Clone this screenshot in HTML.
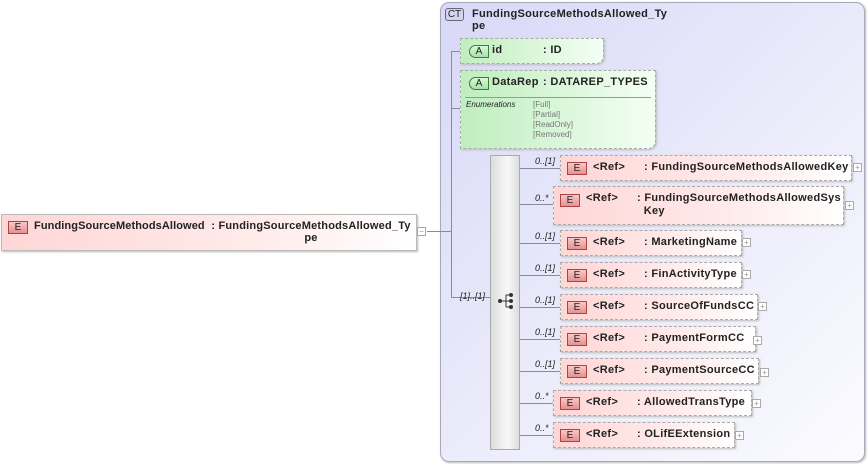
<!DOCTYPE html>
<html><head><style>
*{margin:0;padding:0;box-sizing:border-box}
body{width:868px;height:464px;background:#fff;position:relative;overflow:hidden;font-family:"Liberation Sans",Arial,sans-serif;font-size:11px;color:#222}
.a{position:absolute}
.ct{left:440px;top:2px;width:425px;height:460px;border:1px solid #a8a8b8;border-radius:9px;background:linear-gradient(135deg,#d8d8f8 0%,#ececfb 55%,#fbfbff 100%);box-shadow:1px 1px 2px #bbb}
.ctb{left:445px;top:8px;width:19px;height:13px;border:1px solid #667;border-radius:3px;background:#d4d4f0;font-size:10px;text-align:center;line-height:11px}
.el{border:1px dashed #aaa;background:linear-gradient(90deg,#ffd6d6,#ffeaea 60%,#fff);box-shadow:1px 1px 2px #bbb;font-weight:bold;letter-spacing:0.3px}
.eb{position:absolute;width:20px;height:13px;border:1px solid #a44;background:linear-gradient(#f6c8c8,#e89090);font-size:10px;text-align:center;line-height:11px;font-weight:normal;letter-spacing:0}
.hl{position:absolute;height:1px;background:#8a8a9a}
.vl{position:absolute;width:1px;background:#8a8a9a}
.pl{position:absolute;width:9px;height:9px;border:1px solid #aaa;background:#fff;font-size:8px;line-height:7px;text-align:center;color:#999}
.m{position:absolute;font-style:italic;font-size:9px;color:#222}
.at{border:1px dashed #aaa;background:linear-gradient(90deg,#bfeebf,#f4fff4);border-radius:0 0 8px 0;box-shadow:1px 1px 2px #bbb;letter-spacing:0.3px}
.ab{position:absolute;width:20px;height:13px;border:1px solid #474;border-radius:7px 0 0 7px;background:linear-gradient(#d8f8d8,#a8e0a8);font-size:10px;text-align:center;line-height:11px;letter-spacing:0}
</style></head><body>
<div class="a ct"></div>
<div class="a ctb">CT</div>
<div class="a" style="left:472px;top:8px;font-weight:bold;line-height:12px;letter-spacing:0.3px">FundingSourceMethodsAllowed_Ty<br>pe</div>

<div class="vl" style="left:451px;top:51px;height:247px"></div>
<div class="hl" style="left:451px;top:51px;width:10px"></div>
<div class="hl" style="left:451px;top:108px;width:10px"></div>
<div class="hl" style="left:451px;top:297px;width:39px"></div>
<div class="hl" style="left:427px;top:231px;width:24px"></div>
<div class="m" style="left:460px;top:291px">[1]..[1]</div>

<div class="a at" style="left:460px;top:38px;width:144px;height:26px"><div class="ab" style="left:8px;top:6px">A</div><div class="a" style="left:31px;top:5px;font-weight:bold">id</div><div class="a" style="left:82px;top:5px;font-weight:bold">: ID</div></div>
<div class="a at" style="left:460px;top:70px;width:196px;height:79px"><div class="ab" style="left:8px;top:6px">A</div><div class="a" style="left:31px;top:5px;font-weight:bold">DataRep</div><div class="a" style="left:82px;top:5px;font-weight:bold">: DATAREP_TYPES</div>
<div class="a" style="left:4px;top:26px;width:186px;height:1px;background:#999"></div>
<div class="a" style="left:5px;top:29px;font-size:8px;font-style:italic;letter-spacing:0">Enumerations</div>
<div class="a" style="left:72px;top:29px;font-size:8px;color:#777;line-height:10px;letter-spacing:0">[Full]<br>[Partial]<br>[ReadOnly]<br>[Removed]</div></div>

<div class="a el" style="left:1px;top:214px;width:416px;height:37px;border-style:solid;border-color:#bbb;letter-spacing:0.1px"><div class="eb" style="left:6px;top:6px">E</div><div class="a" style="left:32px;top:5px">FundingSourceMethodsAllowed</div><div class="a" style="left:205px;top:5px;width:208px;text-align:center;line-height:12px;letter-spacing:0.2px">: FundingSourceMethodsAllowed_Ty<br>pe</div></div>
<div class="pl" style="left:417px;top:227px">−</div>

<div class="a" style="left:490px;top:155px;width:30px;height:295px;border:1px solid #aaa;background:linear-gradient(90deg,#ddd,#f8f8f8 60%,#ddd)"></div>
<svg class="a" style="left:497px;top:292px" width="18" height="18"><circle cx="3" cy="9" r="2" fill="#333"/><path d="M5 9H9M9 3V15M9 3H13M9 9H13M9 15H13" stroke="#333" fill="none"/><circle cx="14" cy="3" r="2" fill="#333"/><circle cx="14" cy="9" r="2" fill="#333"/><circle cx="14" cy="15" r="2" fill="#333"/></svg>

<div class="hl" style="left:520px;top:168px;width:40px"></div><div class="m" style="left:535px;top:156px">0..[1]</div>
<div class="a el" style="left:560px;top:155px;width:292px;height:26px"><div class="eb" style="left:6px;top:6px">E</div><div class="a" style="left:32px;top:5px">&lt;Ref&gt;</div><div class="a" style="left:83px;top:5px">: FundingSourceMethodsAllowedKey</div></div><div class="pl" style="left:853px;top:163px">+</div>

<div class="hl" style="left:520px;top:204px;width:33px"></div><div class="m" style="left:535px;top:193px">0..*</div>
<div class="a el" style="left:553px;top:186px;width:291px;height:39px"><div class="eb" style="left:6px;top:7px">E</div><div class="a" style="left:32px;top:5px">&lt;Ref&gt;</div><div class="a" style="left:83px;top:5px;line-height:13px">: FundingSourceMethodsAllowedSys<br>&nbsp;&nbsp;Key</div></div><div class="pl" style="left:845px;top:201px">+</div>

<div class="hl" style="left:520px;top:243px;width:40px"></div><div class="m" style="left:535px;top:231px">0..[1]</div>
<div class="a el" style="left:560px;top:230px;width:182px;height:26px"><div class="eb" style="left:6px;top:6px">E</div><div class="a" style="left:32px;top:5px">&lt;Ref&gt;</div><div class="a" style="left:83px;top:5px">: MarketingName</div></div><div class="pl" style="left:742px;top:238px">+</div>

<div class="hl" style="left:520px;top:275px;width:40px"></div><div class="m" style="left:535px;top:263px">0..[1]</div>
<div class="a el" style="left:560px;top:262px;width:182px;height:26px"><div class="eb" style="left:6px;top:6px">E</div><div class="a" style="left:32px;top:5px">&lt;Ref&gt;</div><div class="a" style="left:83px;top:5px">: FinActivityType</div></div><div class="pl" style="left:742px;top:270px">+</div>

<div class="hl" style="left:520px;top:307px;width:40px"></div><div class="m" style="left:535px;top:295px">0..[1]</div>
<div class="a el" style="left:560px;top:294px;width:198px;height:26px"><div class="eb" style="left:6px;top:6px">E</div><div class="a" style="left:32px;top:5px">&lt;Ref&gt;</div><div class="a" style="left:83px;top:5px">: SourceOfFundsCC</div></div><div class="pl" style="left:758px;top:302px">+</div>

<div class="hl" style="left:520px;top:339px;width:40px"></div><div class="m" style="left:535px;top:327px">0..[1]</div>
<div class="a el" style="left:560px;top:326px;width:196px;height:26px"><div class="eb" style="left:6px;top:6px">E</div><div class="a" style="left:32px;top:5px">&lt;Ref&gt;</div><div class="a" style="left:83px;top:5px">: PaymentFormCC</div></div><div class="pl" style="left:753px;top:336px">+</div>

<div class="hl" style="left:520px;top:371px;width:40px"></div><div class="m" style="left:535px;top:359px">0..[1]</div>
<div class="a el" style="left:560px;top:358px;width:199px;height:26px"><div class="eb" style="left:6px;top:6px">E</div><div class="a" style="left:32px;top:5px">&lt;Ref&gt;</div><div class="a" style="left:83px;top:5px">: PaymentSourceCC</div></div><div class="pl" style="left:760px;top:368px">+</div>

<div class="hl" style="left:520px;top:403px;width:33px"></div><div class="m" style="left:535px;top:391px">0..*</div>
<div class="a el" style="left:553px;top:390px;width:199px;height:26px"><div class="eb" style="left:6px;top:6px">E</div><div class="a" style="left:32px;top:5px">&lt;Ref&gt;</div><div class="a" style="left:83px;top:5px">: AllowedTransType</div></div><div class="pl" style="left:752px;top:399px">+</div>

<div class="hl" style="left:520px;top:435px;width:33px"></div><div class="m" style="left:535px;top:423px">0..*</div>
<div class="a el" style="left:553px;top:422px;width:182px;height:26px"><div class="eb" style="left:6px;top:6px">E</div><div class="a" style="left:32px;top:5px">&lt;Ref&gt;</div><div class="a" style="left:83px;top:5px">: OLifEExtension</div></div><div class="pl" style="left:735px;top:431px">+</div>
</body></html>
